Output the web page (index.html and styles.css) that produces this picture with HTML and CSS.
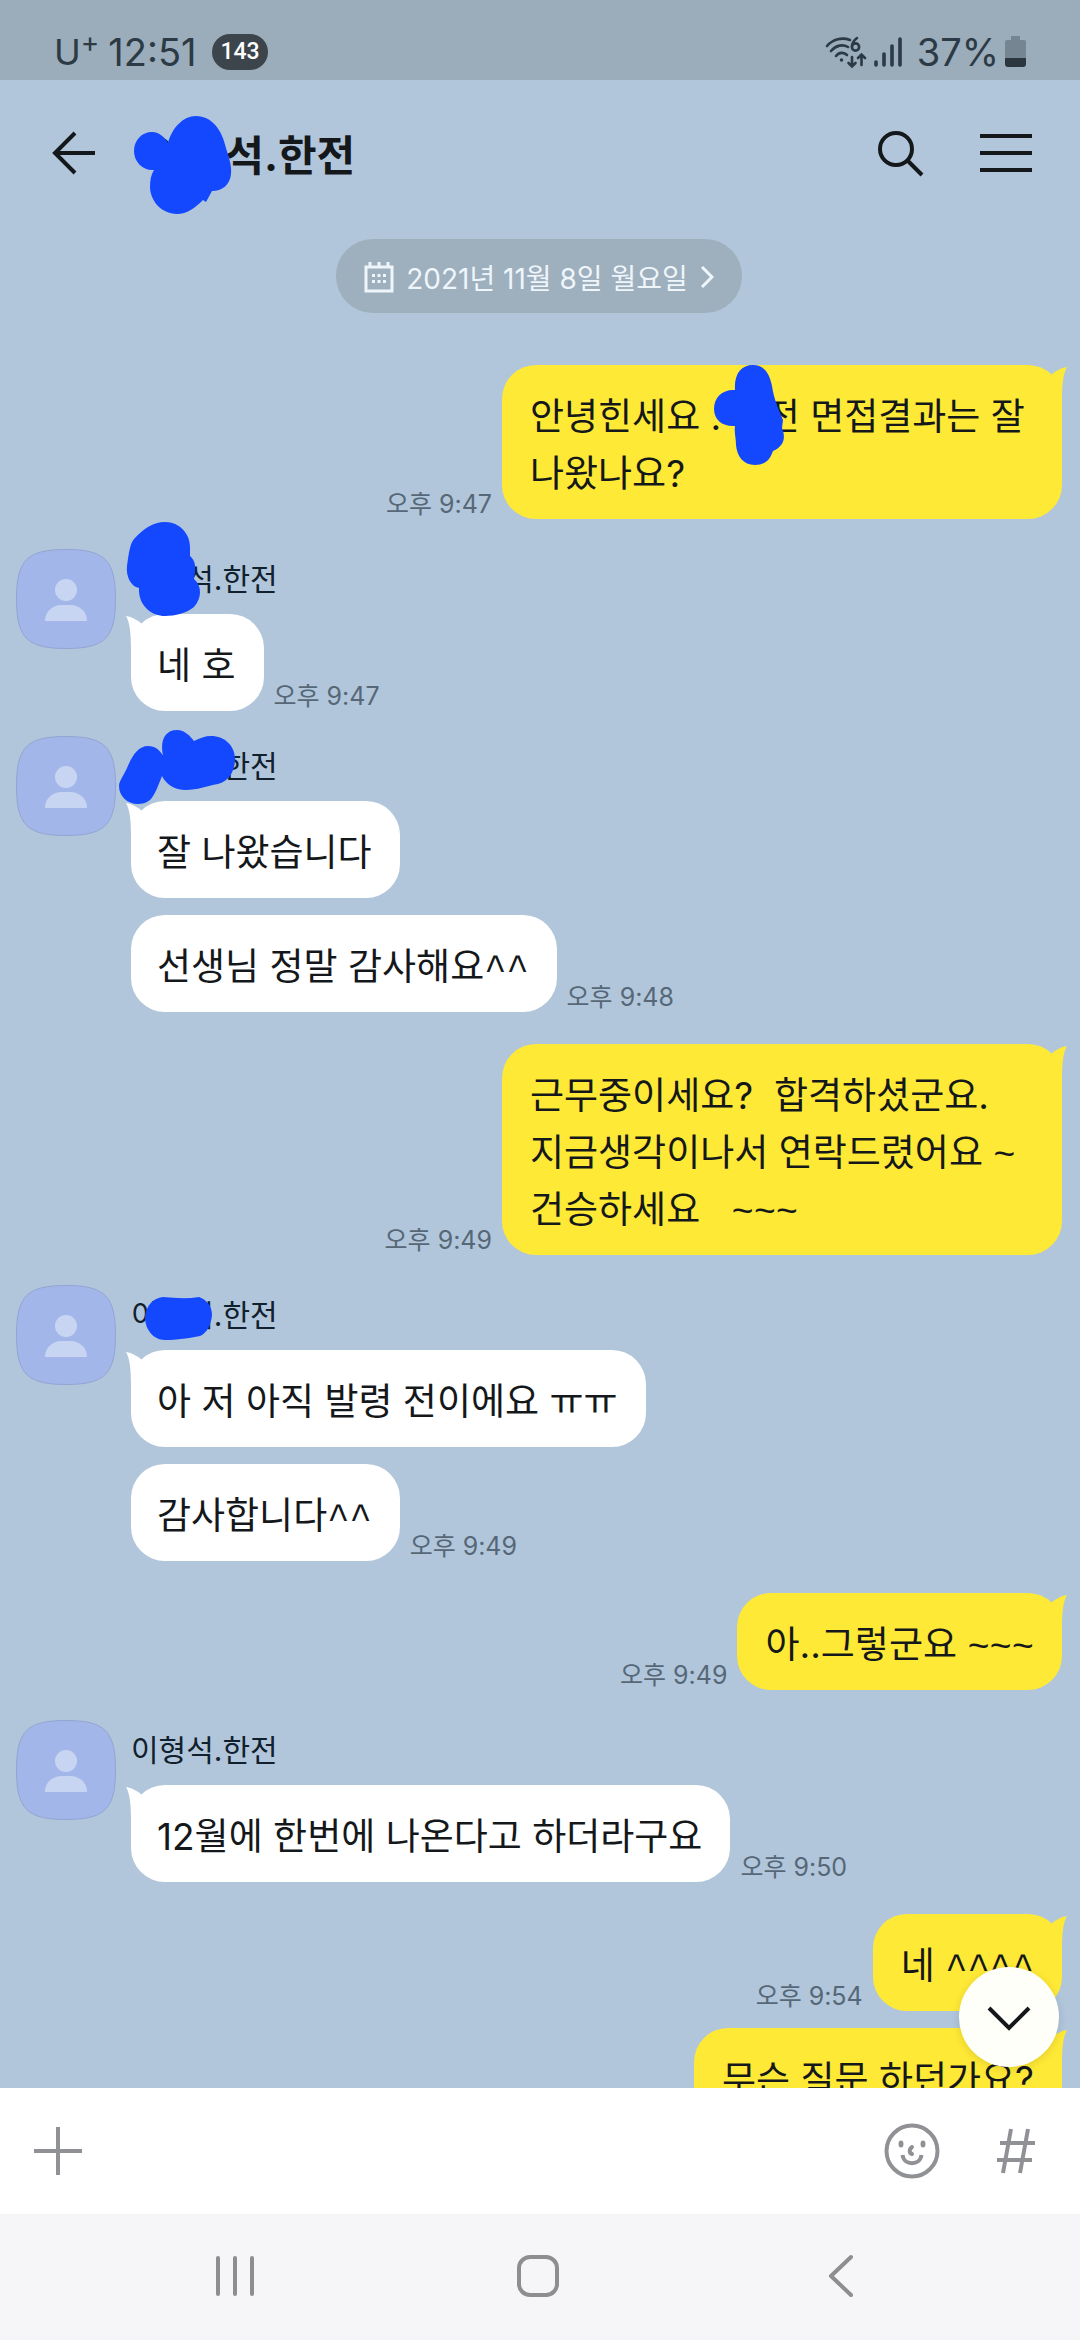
FILE: index.html
```html
<!DOCTYPE html>
<html lang="ko">
<head>
<meta charset="utf-8">
<meta name="viewport" content="width=device-width, initial-scale=1">
<title>이형석.한전</title>
<link rel="stylesheet" href="styles.css">
</head>
<body>
<svg class="defs" width="0" height="0" aria-hidden="true">
  <defs>
    <symbol id="avatar" viewBox="0 0 100 100">
      <path d="M50 .5C89 .5 99.500 11 99.500 50S89 99.500 50 99.500.5 89 .5 50 11 .5 50 .5Z" fill="#a3b6e9" stroke="#92a5d3"/>
      <circle cx="50" cy="41" r="11" fill="#c8d5f2"/>
      <path d="M29 72C29 62 37 56 46 56H54C63 56 71 62 71 72Z" fill="#c8d5f2"/>
    </symbol>
    <symbol id="tail-left" viewBox="0 0 24 36">
      <path d="M0 2C6 3 12 6 16 10L22 28 5 36C5 20 4 9 0 2Z" fill="currentColor"/>
    </symbol>
    <symbol id="tail-right" viewBox="0 0 24 36">
      <path d="M24 2C18 3 12 6 8 10L2 28 19 36C19 20 20 9 24 2Z" fill="currentColor"/>
    </symbol>
  </defs>
</svg>
<div class="phone">
  <div class="status">
    <div class="status-side">
      <span class="carrier">U<sup>+</sup></span>
      <span class="clock">12:51</span>
      <span class="count">143</span>
    </div>
    <div class="status-side">
      <svg class="wifi" width="42" height="34" viewBox="0 0 42 34" fill="none" stroke="#2c3a45" stroke-width="2.600" stroke-linecap="round">
        <path d="M2 11C8 4 17 2 25 5M6 16C11 10 18 9 23 12M11 21C14 17 19 17 22 20"/>
        <path d="M32 3C28 6 27 9 27 11.500"/><circle cx="30.500" cy="12" r="3.600"/>
        <path d="M27 22V31M23.500 28L27 31.500 30.500 28M36.500 30V20M33 23L36.500 19.500 40 23"/>
        <circle cx="16.500" cy="25" r="1" fill="#2c3a45" stroke-width="1.500"/>
      </svg>
      <svg width="28" height="32" viewBox="0 0 28 32" stroke="#2c3a45" stroke-width="3.600" stroke-linecap="round">
        <path d="M2 26V29M10 18V29M18 10V29M26 3V29"/>
      </svg>
      <span class="percent">37%</span>
      <svg class="battery" width="21" height="32" viewBox="0 0 21 32">
        <path d="M6 0H15V4H19Q21 4 21 6V22H0V6Q0 4 2 4H6Z" fill="#758591"/>
        <path d="M0 22H21V28Q21 31 18 31H3Q0 31 0 28Z" fill="#2c363e"/>
      </svg>
    </div>
  </div>

  <header class="header">
    <button class="icon-button back" aria-label="뒤로">
      <svg width="44" height="44" viewBox="0 0 44 44" fill="none" stroke="#15181b" stroke-width="4"><path d="M23 2L3 22 23 42M3 22H43"/></svg>
    </button>
    <h1 class="title">이형석.한전
      <svg class="scribble scribble-title" width="98" height="98" viewBox="134 116 98 98" aria-hidden="true"><path d="M168 143C172 128 183 116 196 116C212 116 222 130 226 148C229 158 232 166 231 174C230 185 222 191 212 191L206 202L203 200C195 208 187 214 177 214C161 214 150 200 150 187C150 180 151 175 154 170C143 171 134 162 134 151C134 140 142 132 152 132C160 132 165 138 168 143Z"/></svg>
    </h1>
    <button class="icon-button search" aria-label="검색">
      <svg width="48" height="48" viewBox="0 0 48 48" fill="none" stroke="#15181b" stroke-width="4"><circle cx="19" cy="20" r="16"/><path d="M31 32L45 46"/></svg>
    </button>
    <button class="icon-button" aria-label="메뉴">
      <svg width="54" height="38" viewBox="0 0 54 38" stroke="#15181b" stroke-width="4"><path d="M1 2H53M1 19H53M1 36H53"/></svg>
    </button>
  </header>

  <main class="chat">
    <button class="date">
      <svg width="30" height="32" viewBox="0 0 30 32" fill="none" stroke="#eef5fb" stroke-width="3"><path d="M2 6H28V30H2ZM6 1V6M15 1V6M24 1V6"/><path d="M8 14.500H22M8 20.500H22" stroke-dasharray="3 2.500"/></svg>
      <span>2021년 11월 8일 월요일</span>
      <svg width="14" height="22" viewBox="0 0 14 22" fill="none" stroke="#eef5fb" stroke-width="3"><path d="M2 1L12 11 2 21"/></svg>
    </button>

    <section class="group mine">
      <div class="line">
        <p class="bubble tailed long">안녕힌세요 . 한전 면접결과는 잘<br>나왔나요?
          <svg class="tail" width="24" height="36"><use href="#tail-right"/></svg>
          <svg class="scribble scribble-bubble" width="71" height="100" viewBox="715 365 71 100" aria-hidden="true"><path d="M736 390C735 374 742 365 754 365C766 365 771 375 773 386C775 400 780 410 784 420L783 428C787 438 785 446 774 451C771 460 766 465 756 465C744 465 738 456 737 445C737 438 735 432 736 426C724 427 715 420 715 409C715 397 724 389 736 390Z"/></svg>
        </p>
        <time>오후 9:47</time>
      </div>
    </section>

    <section class="group theirs">
      <svg class="avatar" width="100" height="100"><use href="#avatar"/></svg>
      <div class="stack">
        <h2 class="name">이형석.한전
          <svg class="scribble scribble-first" width="76" height="94" viewBox="126 522 76 94" aria-hidden="true"><path d="M165 522C180 522 190 534 190 547L190 556C196 561 196 568 194 579C202 586 202 598 194 607C187 613 175 616 165 616C152 616 138 606 139 588C130 586 126 576 127 566C129 552 130 544 134 539C143 529 153 522 165 522Z"/></svg>
        </h2>
        <div class="line">
          <p class="bubble tailed">네 호<svg class="tail" width="24" height="36"><use href="#tail-left"/></svg></p>
          <time>오후 9:47</time>
        </div>
      </div>
    </section>

    <section class="group theirs">
      <svg class="avatar" width="100" height="100"><use href="#avatar"/></svg>
      <div class="stack">
        <h2 class="name">이형석.한전
          <svg class="scribble scribble-second" width="116" height="74" viewBox="119 730 116 74" aria-hidden="true"><path d="M148 746C155 746 160 750 163 756C160 742 164 730 177 730C185 730 190 736 194 741C200 738 205 736 211 736C225 736 235 746 235 759C235 771 229 781 218 784C207 786 197 790 186 790C174 790 166 784 162 776C158 786 155 795 150 800C146 803 142 804 138 804C127 804 119 796 119 786C119 781 124 775 127 768C132 756 138 746 148 746Z"/></svg>
        </h2>
        <div class="line">
          <p class="bubble tailed">잘 나왔습니다<svg class="tail" width="24" height="36"><use href="#tail-left"/></svg></p>
        </div>
        <div class="line">
          <p class="bubble">선생님 정말 감사해요<span class="mark">^^</span></p>
          <time>오후 9:48</time>
        </div>
      </div>
    </section>

    <section class="group mine">
      <div class="line">
        <p class="bubble tailed long">근무중이세요?&nbsp; 합격하셨군요.<br>지금생각이나서 연락드렸어요 <span class="mark">~</span><br>건승하세요&nbsp;&nbsp; <span class="mark">~~~</span><svg class="tail" width="24" height="36"><use href="#tail-right"/></svg></p>
        <time>오후 9:49</time>
      </div>
    </section>

    <section class="group theirs">
      <svg class="avatar" width="100" height="100"><use href="#avatar"/></svg>
      <div class="stack">
        <h2 class="name">이형석.한전
          <svg class="scribble scribble-third" width="67" height="43" viewBox="145 1297 67 43" aria-hidden="true"><path d="M163 1297C175 1298 187 1299 199 1297C207 1300 212 1306 212 1315C211 1325 207 1333 200 1336C190 1338 177 1340 165 1340C153 1340 145 1329 145 1317C146 1306 153 1298 163 1297Z"/></svg>
        </h2>
        <div class="line">
          <p class="bubble tailed">아 저 아직 발령 전이에요 ㅠㅠ<svg class="tail" width="24" height="36"><use href="#tail-left"/></svg></p>
        </div>
        <div class="line">
          <p class="bubble">감사합니다<span class="mark">^^</span></p>
          <time>오후 9:49</time>
        </div>
      </div>
    </section>

    <section class="group mine">
      <div class="line">
        <p class="bubble tailed">아..그렇군요 <span class="mark">~~~</span><svg class="tail" width="24" height="36"><use href="#tail-right"/></svg></p>
        <time>오후 9:49</time>
      </div>
    </section>

    <section class="group theirs">
      <svg class="avatar" width="100" height="100"><use href="#avatar"/></svg>
      <div class="stack">
        <h2 class="name">이형석.한전</h2>
        <div class="line">
          <p class="bubble tailed">12월에 한번에 나온다고 하더라구요<svg class="tail" width="24" height="36"><use href="#tail-left"/></svg></p>
          <time>오후 9:50</time>
        </div>
      </div>
    </section>

    <section class="group mine">
      <div class="line">
        <p class="bubble tailed">네 <span class="mark">^^^^</span><svg class="tail" width="24" height="36"><use href="#tail-right"/></svg></p>
        <time>오후 9:54</time>
      </div>
      <div class="line">
        <p class="bubble tailed">무슨 질문 하던가요?<svg class="tail" width="24" height="36"><use href="#tail-right"/></svg></p>
      </div>
    </section>

    <button class="jump" aria-label="맨 아래로">
      <svg width="44" height="26" viewBox="0 0 44 26" fill="none" stroke="#15181b" stroke-width="4"><path d="M2 2L22 22 42 2"/></svg>
    </button>
  </main>

  <form class="composer">
    <button class="icon-button" type="button" aria-label="추가">
      <svg width="48" height="48" viewBox="0 0 48 48" stroke="#8f9195" stroke-width="4"><path d="M24 0V48M0 24H48"/></svg>
    </button>
    <input class="message" type="text" aria-label="메시지 입력">
    <button class="icon-button smile" type="button" aria-label="이모티콘">
      <svg width="56" height="56" viewBox="0 0 56 56" fill="none" stroke="#8f9195" stroke-width="4"><circle cx="28" cy="28" r="25.500"/><path d="M28 24C25 26 25 30 28 31" stroke-linecap="round"/><path d="M18.500 32C20 43 36 43 37.500 32"/><ellipse cx="17" cy="21" rx="1.500" ry="2.500" fill="#8f9195" stroke-width="2"/><ellipse cx="39" cy="21" rx="1.500" ry="2.500" fill="#8f9195" stroke-width="2"/></svg>
    </button>
    <button class="icon-button" type="button" aria-label="샵 검색">
      <svg width="40" height="46" viewBox="0 0 40 46" fill="none" stroke="#8f9195" stroke-width="4"><path d="M15 1L7 45M32 1L24 45M4 15H39M1 32H36"/></svg>
    </button>
  </form>

  <nav class="nav">
    <button class="icon-button" aria-label="최근 앱"><svg width="42" height="44" viewBox="0 0 42 44" stroke="#8e8e90" stroke-width="4" stroke-linecap="round"><path d="M4 4V40M21 4V40M38 4V40"/></svg></button>
    <button class="icon-button" aria-label="홈"><svg width="42" height="44" viewBox="0 0 42 44" fill="none" stroke="#8e8e90" stroke-width="4"><rect x="2" y="3" width="38" height="38" rx="11"/></svg></button>
    <button class="icon-button" aria-label="뒤로 가기"><svg width="42" height="44" viewBox="0 0 42 44" fill="none" stroke="#8e8e90" stroke-width="4" stroke-linecap="round" stroke-linejoin="round"><path d="M31 3L11 22 31 41"/></svg></button>
  </nav>
</div>
</body>
</html>
```

FILE: styles.css
```css
* {
  box-sizing: border-box;
}

body {
  margin: 0;
  font-family: Inter, "Noto Sans CJK KR", sans-serif;
  color: #15181b;
}

h1,
h2,
p {
  margin: 0;
}

svg {
  display: block;
  flex: none;
}

button {
  border: 0;
  background: none;
  font: inherit;
  cursor: pointer;
}

.defs {
  position: absolute;
}

.phone {
  display: flex;
  flex-direction: column;
  height: 100vh;
  background: #b1c6db;
}

.status {
  display: flex;
  justify-content: space-between;
  flex: none;
  height: 80px;
  padding: 24px 54px 0;
  background: #9bacba;
  color: #2c3a45;
  font-size: 38px;
  line-height: 56px;
}

.status-side {
  display: flex;
  align-items: center;
}

.carrier {
  display: flex;
  margin-right: 9px;
  font-size: 36px;
}

.carrier sup {
  font-size: 28px;
  line-height: 36px;
}

.count {
  margin-left: 16px;
  padding: 0 8px;
  border-radius: 18px;
  background: #3d454c;
  color: #fff;
  font-family: Roboto, sans-serif;
  font-size: 23px;
  font-weight: 500;
  line-height: 36px;
}

.wifi {
  margin-right: 7px;
}

.percent {
  margin: 0 6px 0 15px;
}

.header {
  display: flex;
  align-items: center;
  flex: none;
  height: 146px;
  padding: 0 47px 0 52px;
}

.icon-button {
  display: flex;
  align-items: center;
  justify-content: center;
  flex: none;
  padding: 0;
}

.title {
  position: relative;
  flex: 1;
  margin-left: 52px;
  padding-top: 6px;
  font-size: 42px;
  line-height: 60px;
}

.search {
  margin-right: 54px;
}

.scribble {
  position: absolute;
  z-index: 1;
  fill: #1448ff;
}

.scribble-title {
  top: -4px;
  left: -14px;
}

.scribble-bubble {
  top: 0;
  left: 212px;
}

.scribble-first {
  top: -27px;
  left: -5px;
}

.scribble-second {
  top: -6px;
  left: -12px;
}

.scribble-third {
  top: 12px;
  left: 14px;
}

.chat {
  position: relative;
  display: flex;
  flex-direction: column;
  flex: 1;
  min-height: 0;
  overflow: hidden;
  padding: 13px 18px 0 16px;
}

.date {
  display: flex;
  align-items: center;
  align-self: center;
  flex: none;
  gap: 12px;
  height: 74px;
  margin-bottom: 52px;
  padding: 2px 28px 0;
  border-radius: 37px;
  background: #9eafbd;
  color: #eef5fb;
  font-size: 28px;
}

.group {
  display: flex;
  flex: none;
}

.mine {
  flex-direction: column;
  gap: 17px;
}

.theirs {
  gap: 15px;
}

.mine + .theirs {
  margin-top: 30px;
}

.theirs + .theirs {
  margin-top: 25px;
}

.theirs + .mine {
  margin-top: 32px;
}

.stack {
  display: flex;
  flex-direction: column;
  gap: 17px;
}

.name {
  position: relative;
  height: 65px;
  margin-bottom: -17px;
  font-size: 30px;
  font-weight: 400;
  line-height: 60px;
  color: #10202c;
}

.line {
  display: flex;
  align-items: flex-end;
  gap: 10px;
}

.mine .line {
  flex-direction: row-reverse;
}

.bubble {
  position: relative;
  padding: 23px 28px 17px 26px;
  border-radius: 34px;
  background: #fff;
  font-size: 37px;
  line-height: 57px;
}

.mine .bubble {
  padding-left: 28px;
  background: #fee936;
}

.mine .long {
  min-width: 560px;
}

.mark {
  font-family: "Liberation Mono", monospace;
  line-height: 1;
}

.tail {
  position: absolute;
  top: 0;
  left: -5px;
  color: #fff;
}

.mine .tail {
  right: -5px;
  left: auto;
  color: #fee936;
}

time {
  font-size: 25px;
  line-height: 30px;
  color: #566877;
}

.jump {
  position: absolute;
  right: 21px;
  bottom: 21px;
  display: flex;
  align-items: center;
  justify-content: center;
  width: 100px;
  height: 100px;
  padding: 4px 0 0;
  border-radius: 50%;
  background: #fffffa;
  box-shadow: 0 2px 8px rgba(0, 0, 0, .12);
}

.composer {
  display: flex;
  align-items: center;
  flex: none;
  height: 126px;
  padding: 0 44px 0 34px;
  background: #fff;
}

.message {
  flex: 1;
  min-width: 0;
  height: 80px;
  margin: 0 20px;
  border: 0;
  outline: 0;
  background: none;
  font: inherit;
  font-size: 37px;
}

.smile {
  margin-right: 56px;
}

.nav {
  display: flex;
  flex: none;
  height: 126px;
  padding: 0 88px 2px 84px;
  background: #f6f6f8;
}

.nav .icon-button {
  flex: 1;
}
```
